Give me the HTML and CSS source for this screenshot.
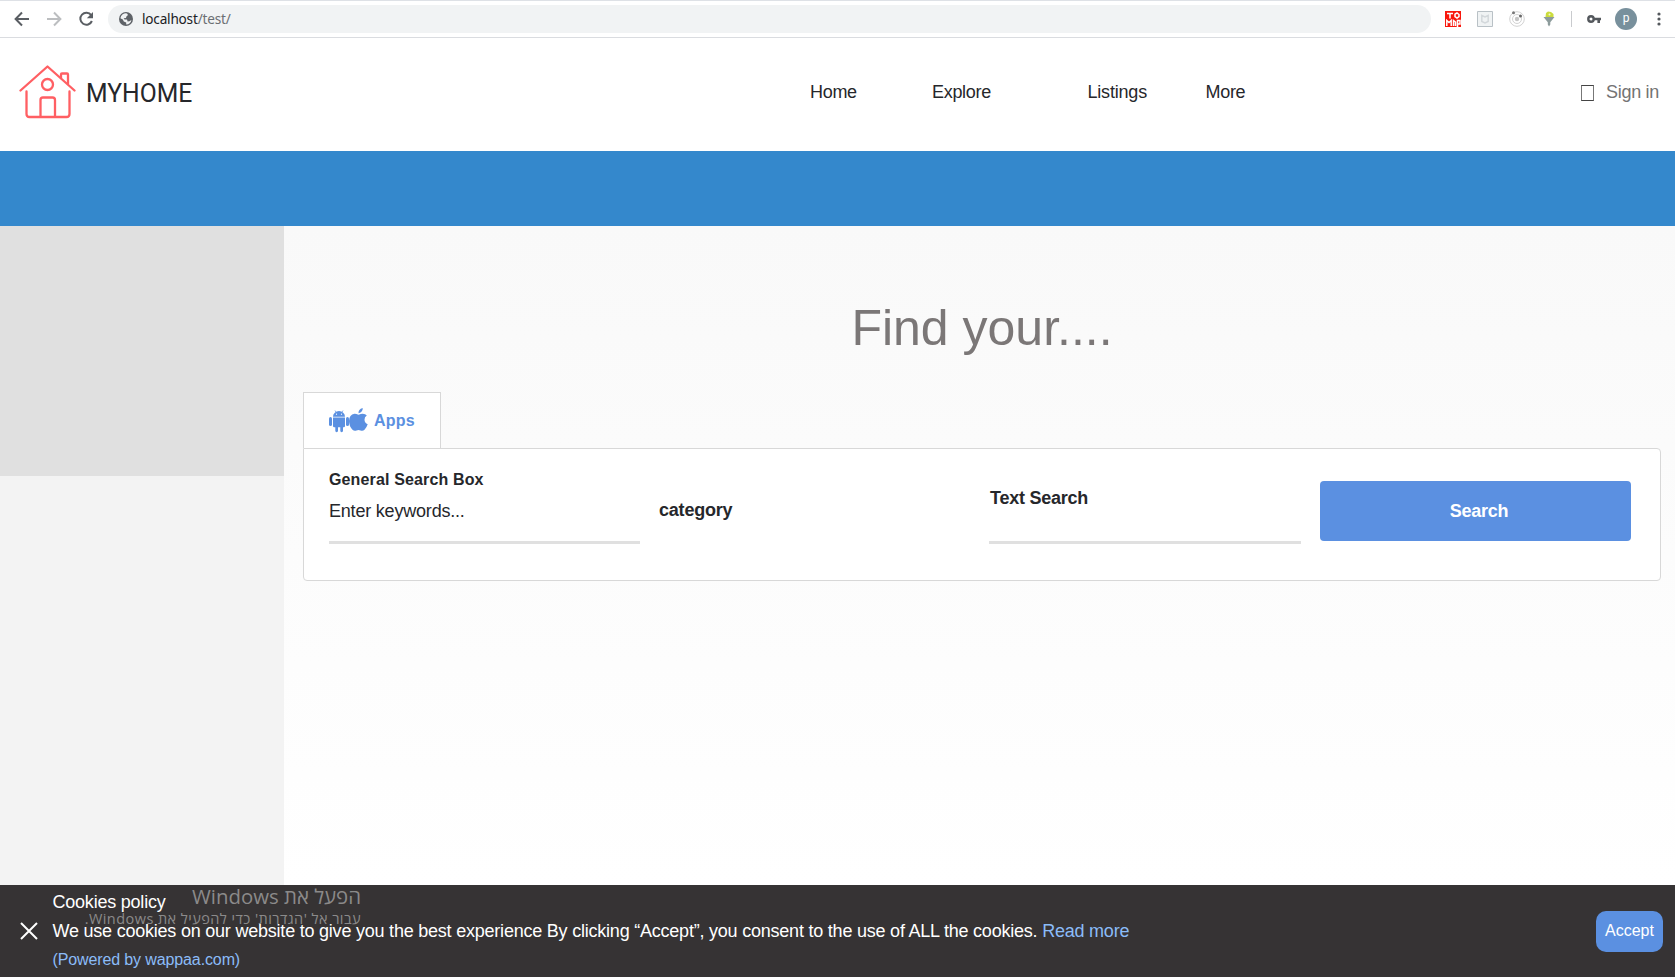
FILE: index.html
```
<!DOCTYPE html>
<html lang="en">
<head>
<meta charset="utf-8">
<title>MyHome</title>
<link rel="stylesheet" href="styles.css">
</head>
<body>
<div class="page">
  <div class="toolbar">
    <div class="nav-icons">
      <svg class="ic" viewBox="0 0 16 16"><path d="M15 8H2M8 1.5L1.6 8 8 14.5" fill="none" stroke="#5a5e63" stroke-width="2"/></svg>
      <svg class="ic" viewBox="0 0 16 16"><path d="M1 8h13M8 1.5L14.4 8 8 14.5" fill="none" stroke="#bcbec0" stroke-width="2"/></svg>
      <svg class="ic" viewBox="0 0 16 16"><path d="M13.2 4.2A6 6 0 1 0 13.9 10" fill="none" stroke="#5a5e63" stroke-width="2"/><path d="M15 1v6.2H8.8z" fill="#5a5e63"/></svg>
    </div>
    <div class="address">
      <svg class="globe" viewBox="0 0 14 14"><circle cx="7" cy="7" r="7" fill="#5f6368"/><path d="M8 1.4L9 3 7.4 4.4 7 6 4.6 6.2 5.6 7.4H8L8.6 9.4 10.4 9.2 12.4 8A5.6 5.6 0 0 1 7.2 12.5V10.4L4.8 9.6 3.8 7.6 1.4 6.2A5.6 5.6 0 0 1 8 1.4z" fill="#f1f3f4"/></svg>
      <span class="url">localhost<span class="path">/test/</span></span>
    </div>
    <div class="extensions">
      <svg class="ext" viewBox="0 0 16 16"><path fill="#f8170c" d="M0 0h16v16H0z"/><path d="M2 2.500h6M5 2v5.500M10 3.200l2-1.200 2 1.500v2L12 7l-2-1.500zM1.800 15V9.500l2.200 2 2.200-2V15M8.500 15V9.500l2 1.500V15M12.500 16V9.500H15V13h-2.500" fill="none" stroke="#fff" stroke-width="1.500"/></svg>
      <svg class="ext" viewBox="0 0 16 16"><path d="M.5.500h15v15H.5z" fill="#f0f3f4" stroke="#b9c1c6"/><path d="M4.800 4.500L8 6l3.200-1.500v6L8 12l-3.200-1.500z" fill="none" stroke="#d3d8db" stroke-width="1.500"/></svg>
      <svg class="ext" viewBox="0 0 16 16"><g fill="none" stroke="#d2d2d2"><circle cx="8" cy="8" r="7.300"/><circle cx="8" cy="8" r="4.500"/></g><circle cx="8" cy="8" r="2.200" fill="#c5c5c5"/><circle cx="4.500" cy="1.800" r="1.500" fill="#777"/><circle cx="11.500" cy="5" r="1.500" fill="#666"/></svg>
      <svg class="ext" viewBox="0 0 16 16"><path d="M4.500 6L5 2l2-1.500 3 .5 2.500 2v3z" fill="#cbdc3c"/><circle cx="8.500" cy="3.500" r="1" fill="#f3f7cf"/><path d="M2.500 6h11L9.300 11.200v2.300L8 15.500l-1.200-2v-2.300z" fill="#8d9c9c"/></svg>
      <span class="divider"></span>
      <svg class="key" viewBox="0 0 14 8"><circle cx="4" cy="4" r="2.700" fill="none" stroke="#54585d" stroke-width="2.400"/><path d="M6 2.700h8v2.600h-1V8h-2.600V5.300H6z" fill="#54585d"/></svg>
      <span class="avatar">p</span>
      <svg class="dots" viewBox="0 0 4 14"><g fill="#54585d"><circle cx="2" cy="2" r="1.600"/><circle cx="2" cy="7" r="1.600"/><circle cx="2" cy="12" r="1.600"/></g></svg>
    </div>
  </div>

  <header class="header">
    <div class="brand">
      <svg class="house" viewBox="0 0 58 54"><g fill="none" stroke="#ff5f63" stroke-width="2.300" stroke-linecap="round" stroke-linejoin="round"><path d="M1.500 25.500L28.500 1.500 55.500 25.500"/><path d="M42 13V9.500q0-1 1-1h5q1 0 1 1V19"/><circle cx="28.500" cy="19.500" r="5.500"/><path d="M7.500 26.500V49q0 3 3 3H47.500q3 0 3-3V26.500M21.500 52V35q0-2.500 2.500-2.500h9.500q2.500 0 2.500 2.500v17"/></g></svg>
      <span class="brand-name">MYHOME</span>
    </div>
    <nav class="menu"><a class="home">Home</a><a class="explore">Explore</a><a class="listings">Listings</a><a>More</a></nav>
    <div class="signin"><span class="glyph-box"></span><span>Sign in</span></div>
  </header>
  <div class="banner"></div>

  <div class="body">
    <aside class="sidebar"><div class="side-block"></div></aside>
    <main class="main">
      <h1 class="title">Find your....</h1>
      <div class="tab">
        <svg class="app-icons" viewBox="0 0 39 26"><g fill="#5b90e1"><path d="M4 8.700a6 5.700 0 0 1 12 0zM4 9.500h12v8.500q0 1.200-1.200 1.200H14v3.600a1.300 1.300 0 0 1-2.700 0v-3.600H9v3.600a1.300 1.300 0 0 1-2.700 0v-3.600h-1q-1.300 0-1.300-1.300z"/><rect x="0" y="9" width="3" height="9" rx="1.500"/><rect x="17" y="9" width="3" height="9" rx="1.500"/><path d="M29.500 5.300q-.3-4 4.200-5.300.4 4-4.200 5.300zM37.800 7.500q-2.400 1.500-2.300 4.200.1 3.200 3.200 4.500-1 3.200-3.200 5.500-1.700 1.800-4 .7-2-.9-4 0-2.200 1-4-.7Q20 18 20 13q.2-6.500 5.500-7.300 1.500-.1 4 1.100 2.400-1 4.300-1 2.700.1 4 1.700z"/></g><path d="M6 2.500l1.200 2M14 2.500l-1.200 2" stroke="#5b90e1" stroke-width=".7"/><g fill="#fff"><circle cx="7.500" cy="6.200" r=".6"/><circle cx="12.500" cy="6.200" r=".6"/></g></svg>
        <span>Apps</span>
      </div>
      <section class="card">
        <div class="field"><label class="small-label">General Search Box</label><div class="placeholder">Enter keywords...</div></div>
        <div class="category">category</div>
        <div class="field"><label class="text-label">Text Search</label></div>
        <button class="search">Search</button>
      </section>
    </main>
  </div>

  <footer class="cookies">
    <svg class="close" viewBox="0 0 18 18"><path d="M1 1l16 16M17 1L1 17" stroke="#fff" stroke-width="2"/></svg>
    <div class="cookie-text">
      <div class="policy">Cookies policy</div>
      <div class="message">We use cookies on our website to give you the best experience By clicking “Accept”, you consent to the use of ALL the cookies. <a>Read more</a></div>
      <a class="powered">(Powered by wappaa.com)</a>
    </div>
    <button class="accept">Accept</button>
    <div class="watermark" dir="rtl"><div class="wm-title">הפעל את Windows</div><div class="wm-sub">עבור אל 'הגדרות' כדי להפעיל את Windows.</div></div>
  </footer>
</div>
</body>
</html>
```
FILE: styles.css
```
* { box-sizing: border-box; }
body { margin: 0; background: #fff; color: #26272b; font-family: "Liberation Sans", Arial, sans-serif; font-size: 18px; }
.page { height: 977px; display: flex; flex-direction: column; overflow: hidden; }
.toolbar { height: 38px; flex: none; display: flex; align-items: center; border-top: 1px solid #dee1e6; border-bottom: 1px solid #dadce0; padding: 0 15px 0 14px; }
.nav-icons { display: flex; gap: 16px; width: 94px; }
.ic { width: 16px; height: 16px; flex: none; }
.address { flex: 1; height: 28px; border-radius: 14px; background: #f1f3f4; display: flex; align-items: center; padding-left: 11px; gap: 9px; }
.globe { width: 14px; height: 14px; }
.url { font: 13.6px "Noto Sans", "Open Sans", sans-serif; letter-spacing: -.2px; color: #202124; line-height: 20px; }
.path { color: #6b6f73; }
.extensions { display: flex; align-items: center; width: 229px; padding-left: 14px; }
.ext { width: 16px; height: 16px; margin-right: 16px; flex: none; }
.divider { width: 1px; height: 16px; background: #c9cbce; margin: 0 15px 0 -2px; flex: none; }
.key { width: 14px; height: 8px; margin-right: 14px; flex: none; }
.avatar { width: 22px; height: 22px; border-radius: 50%; background: #78909c; color: #fff; font: 12px/20px Roboto, sans-serif; text-align: center; flex: none; }
.dots { width: 4px; height: 14px; margin-left: 20px; flex: none; }

.header { height: 113px; flex: none; display: flex; align-items: flex-start; letter-spacing: -.3px; }
.brand { width: 810px; display: flex; padding: 27px 0 0 19px; }
.house { width: 58px; height: 54px; }
.brand-name { font: 26px/30px Roboto, sans-serif; letter-spacing: 0; margin: 13px 0 0 9px; transform: scaleX(.95); transform-origin: left; }
.menu { display: flex; padding-top: 43px; line-height: 22px; flex: 1; }
.home { width: 122px; }
.explore { width: 155.5px; }
.listings { width: 118px; letter-spacing: -.2px; }
.signin { display: flex; padding: 43px 16px 0 0; line-height: 22px; color: #737373; gap: 12px; }
.glyph-box { width: 13px; height: 16px; border: 1px solid #777; border-top-color: #444; border-bottom-color: #444; margin-top: 4px; }
.banner { height: 75px; flex: none; background: #3488cc; }

.body { height: 659px; flex: none; display: flex; }
.sidebar { width: 284px; background: #f3f3f3; }
.side-block { height: 250px; background: #e0e0e0; }
.main { flex: 1; background: linear-gradient(#f9f9f9, #fff); padding: 72px 14px 0 19px; }
.title { margin: 0; height: 94px; text-align: center; font-size: 50px; font-weight: 400; line-height: 60px; color: #7b7777; }
.tab { width: 138px; height: 56px; border: 1px solid #d8d8d8; border-bottom: 0; background: #fff; display: flex; align-items: center; padding-left: 25px; gap: 6px; font-size: 16px; letter-spacing: .2px; font-weight: 700; color: #5b90e1; }
.app-icons { width: 39px; height: 26px; }
.card { height: 133px; border: 1px solid #d8d8d8; border-radius: 0 4px 4px 4px; background: #fff; display: grid; grid-template-columns: 311px 311px 312px 311px; column-gap: 19px; padding: 20px 0 0 25px; align-items: start; letter-spacing: -.2px; }
.field { height: 75px; border-bottom: 3px solid #e0e0e0; display: flex; flex-direction: column; }
.small-label { font-size: 16px; font-weight: 700; line-height: 20px; letter-spacing: .14px; margin-top: 1px; }
.placeholder { line-height: 22px; margin-top: 10px; }
.category { font-weight: 700; line-height: 22px; margin-top: 30px; }
.text-label { font-weight: 700; line-height: 22px; margin: 18px 0 0 1px; letter-spacing: -.25px; }
.search { height: 60px; margin-top: 12px; border: 0; border-radius: 4px; padding: 0 0 0 7px; background: #5b90e1; color: #fff; font: 700 18px "Liberation Sans", Arial, sans-serif; letter-spacing: -.25px; }

.cookies { height: 92px; flex: none; background: #363334; color: #fff; position: relative; display: flex; align-items: center; padding: 0 12px 0 20px; }
.close { width: 18px; height: 18px; }
.cookie-text { flex: 1; margin-left: 14.5px; align-self: flex-start; padding-top: 6px; line-height: 22px; letter-spacing: -.22px; }
.message { margin-top: 7px; }
.cookie-text a { color: #8bbcf8; }
.powered { display: block; font-size: 16px; margin-top: 8px; line-height: 20px; letter-spacing: -.12px; }
.cookie-text .powered { letter-spacing: -.12px; }
.accept { width: 67px; height: 41px; border: 0; border-radius: 10px; padding: 0; background: #5b90e1; color: #fff; font: 16px "Liberation Sans", Arial, sans-serif; }
.watermark { position: absolute; left: 60px; top: -1px; width: 301px; color: #8b8a8a; font-family: "Open Sans", "Noto Sans", "DejaVu Sans", sans-serif; }
.wm-title { font-size: 20.4px; line-height: 24px; white-space: nowrap; }
.wm-sub { font-size: 14.5px; letter-spacing: .45px; line-height: 20px; margin-top: 1px; white-space: nowrap; }
```
